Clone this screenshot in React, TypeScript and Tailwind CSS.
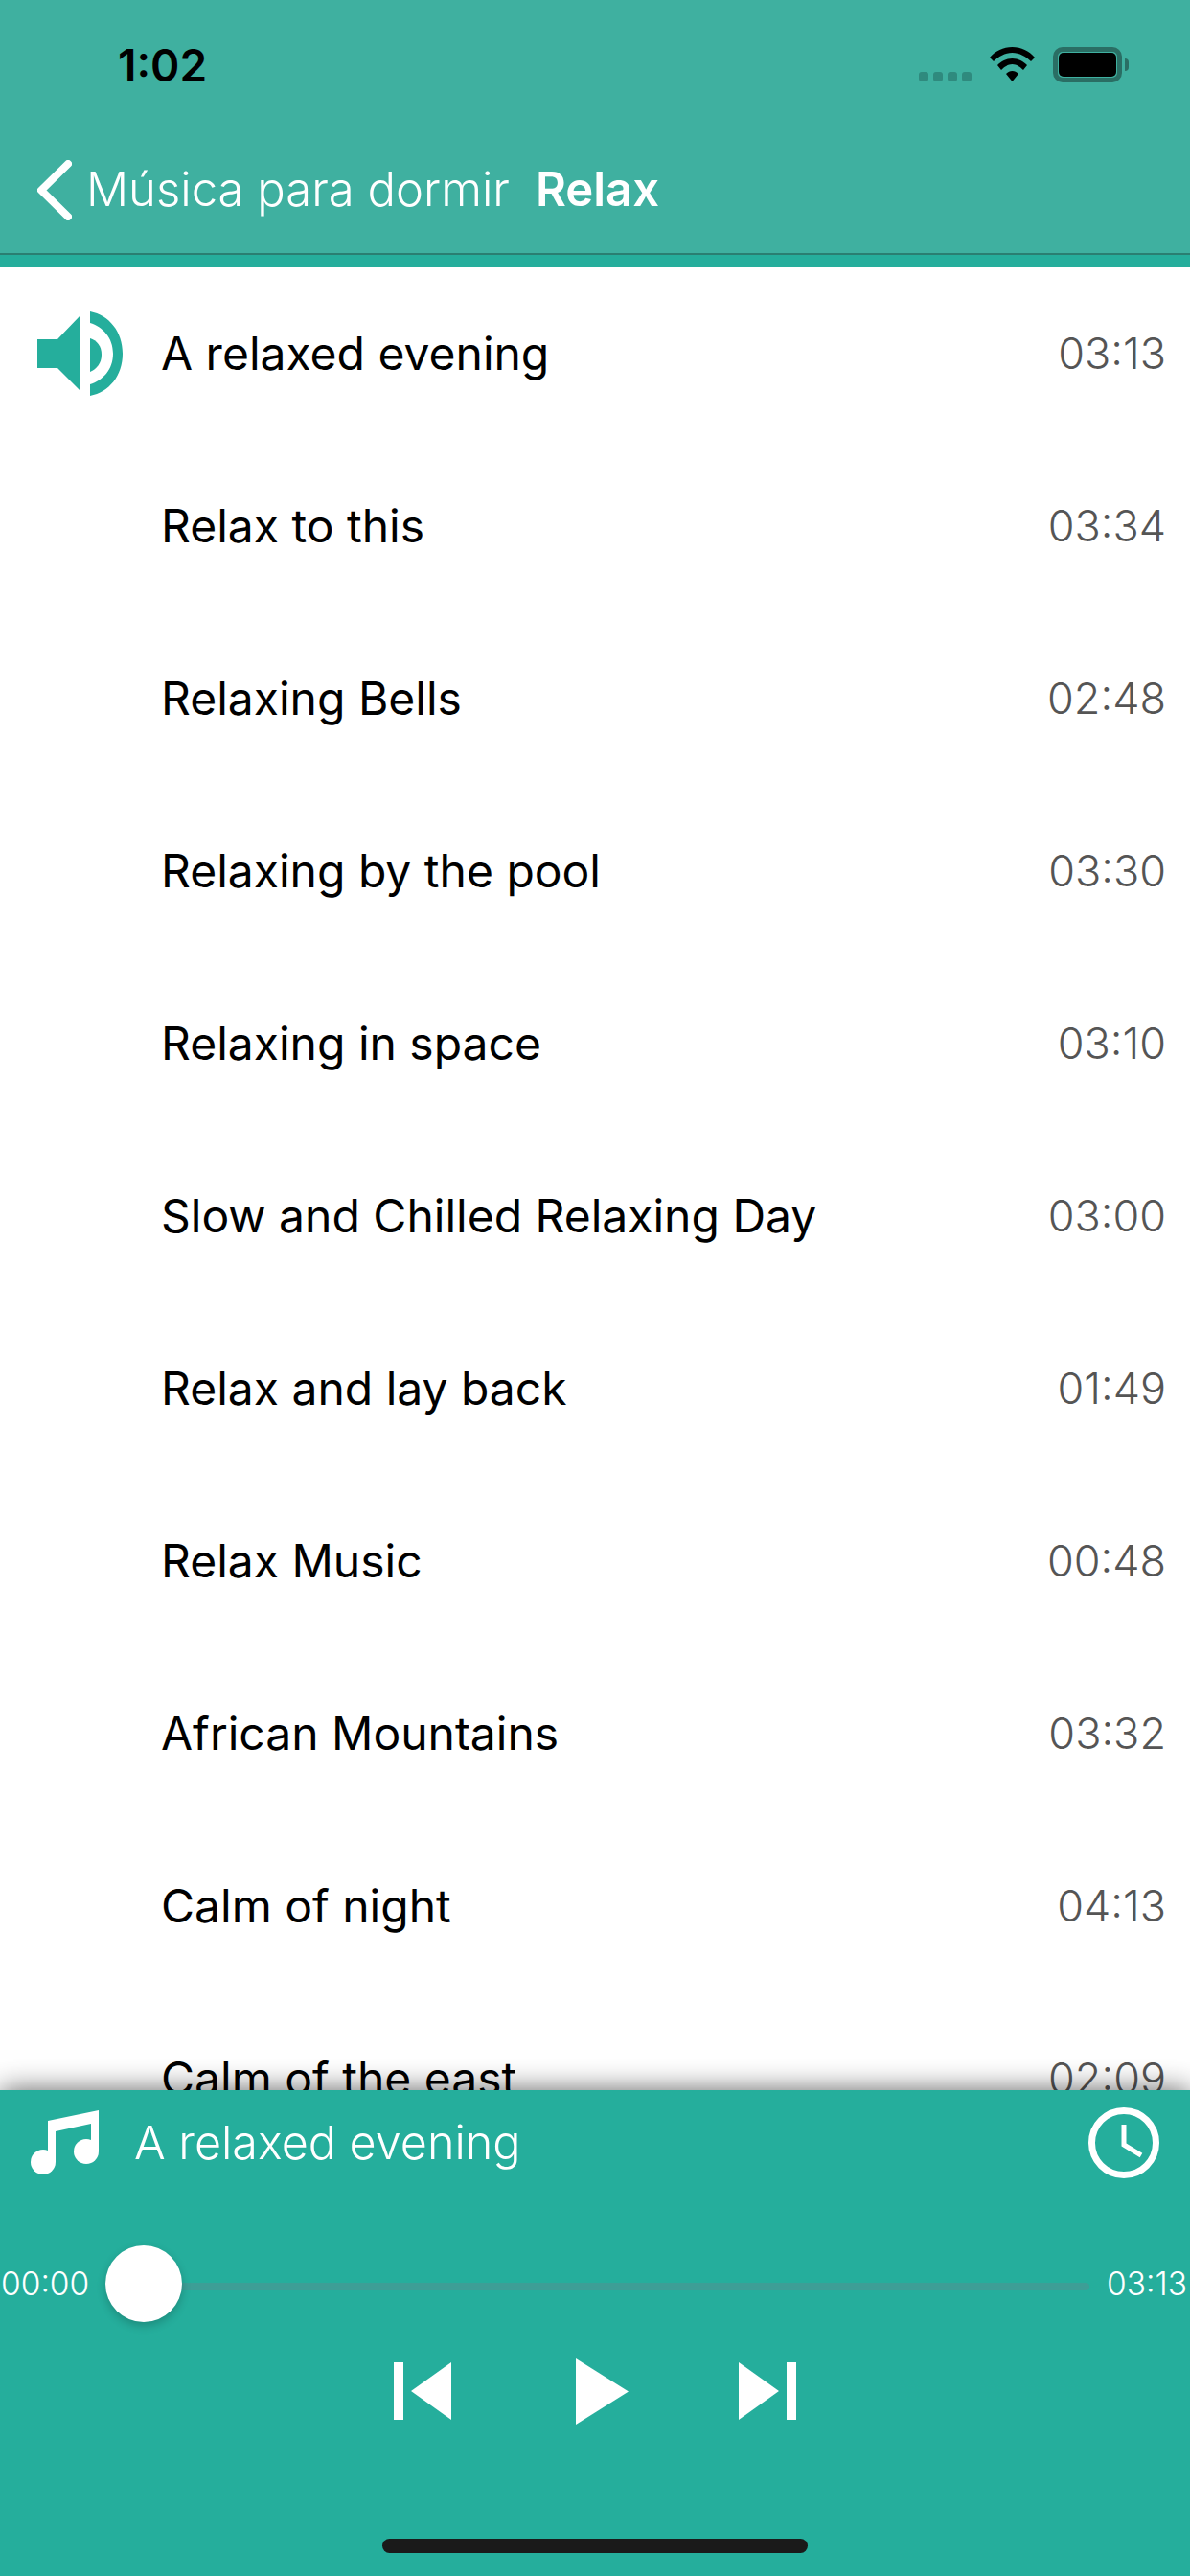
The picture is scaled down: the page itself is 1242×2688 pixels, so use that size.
import React from 'react';

type Track = {
    title: string;
    duration: string;
};

const tracks: Track[] = [
    { title: 'A relaxed evening', duration: '03:13' },
    { title: 'Relax to this', duration: '03:34' },
    { title: 'Relaxing Bells', duration: '02:48' },
    { title: 'Relaxing by the pool', duration: '03:30' },
    { title: 'Relaxing in space', duration: '03:10' },
    { title: 'Slow and Chilled Relaxing Day', duration: '03:00' },
    { title: 'Relax and lay back', duration: '01:49' },
    { title: 'Relax Music', duration: '00:48' },
    { title: 'African Mountains', duration: '03:32' },
    { title: 'Calm of night', duration: '04:13' },
    { title: 'Calm of the east', duration: '02:09' },
];

const SpeakerIcon = () => (
    <svg viewBox="38 324 92 90" className="w-[92px] h-[90px]" fill="#25AE9C">
        <path d="M39 354H60L84 329V408L60 384H39Z" />
        <path d="M94 325C114 329 128 346 128 369C128 392 114 409 94 413V401C107 397 118 386 118 369C118 352 107 341 94 337Z" />
        <path d="M94 353C101 355 106 361 106 370C106 379 101 385 94 388Z" />
    </svg>
);

const StatusIcons = () => (
    <div className="flex items-start">
        <div className="flex gap-[5px] mt-[26px] mr-[19px]">
            <div className="w-[10px] h-[10px] rounded-[3px] bg-[#2F8A7E]" />
            <div className="w-[10px] h-[10px] rounded-[3px] bg-[#2F8A7E]" />
            <div className="w-[10px] h-[10px] rounded-[3px] bg-[#2F8A7E]" />
            <div className="w-[10px] h-[10px] rounded-[3px] bg-[#2F8A7E]" />
        </div>
        <svg viewBox="0 0 47 36" className="w-[47px] h-[36px] mr-[19px]" fill="#000">
            <path d="M0 11C6 4 14 0 23.5 0C33 0 41 4 47 11L43 15C38 10 31 6 23.5 6C16 6 9 10 4 15Z" />
            <path d="M8 19C12 15 17 12 23.5 12C30 12 35 15 39 19L35 24C32 21 28 18 23.5 18C19 18 15 21 12 24Z" />
            <path d="M17 28C19 26 21 25 23.5 25C26 25 28 26 30 28L23.5 36Z" />
        </svg>
        <div className="flex items-center">
            <div className="w-[72px] h-[37px] rounded-[10px] border-[5px] border-[#2A6E64] p-px">
                <div className="w-full h-full rounded-[5px] bg-black" />
            </div>
            <div className="w-[4px] h-[13px] ml-[3px] rounded-r-[4px] bg-[#2A6E64]" />
        </div>
    </div>
);

const Controls = () => (
    <div className="flex items-center justify-center h-[70px]">
        <svg viewBox="0 0 60 60" className="w-[60px] h-[60px]" fill="#fff">
            <rect x="0" y="0" width="10" height="60" />
            <path d="M60 0V60L18 30Z" />
        </svg>
        <svg viewBox="0 0 55 69" className="w-[55px] h-[69px] ml-[130px] mr-[115px]" fill="#fff">
            <path d="M0 0L55 34.5L0 69Z" />
        </svg>
        <svg viewBox="0 0 60 60" className="w-[60px] h-[60px]" fill="#fff">
            <path d="M0 0V60L42 30Z" />
            <rect x="50" y="0" width="10" height="60" />
        </svg>
    </div>
);

const App = () => {
    return (
        <div className="relative flex flex-col w-[1242px] h-[2688px] overflow-hidden bg-white font-['Inter','Liberation_Sans',sans-serif]">
            <header className="shrink-0 bg-[#3FB0A0] h-[264px]">
                <div className="flex items-start justify-between h-[166px] pl-[123px] pr-[64px] pt-[49px]">
                    <span className="text-[46px] leading-[38px] font-semibold text-black">1:02</span>
                    <StatusIcons />
                </div>
                <div className="flex items-center h-[64px] pl-[39px] text-white text-[49px]">
                    <svg viewBox="0 0 36 63" className="w-[36px] h-[63px] mr-[15px]" fill="none" stroke="#fff" strokeWidth="8" strokeLinecap="round" strokeLinejoin="round">
                        <path d="M32 4L4 31.5L32 59" />
                    </svg>
                    <span className="font-light">Música para dormir</span>
                    <span className="ml-[27px] font-semibold">Relax</span>
                </div>
            </header>
            <div className="shrink-0 h-[15px] bg-[#25AE9C] border-t-2 border-[#2A7F72]" />

            <div className="flex-1 min-h-0 overflow-hidden">
                {tracks.map((track, index) => (
                    <div key={index} className="flex items-center h-[180px] pl-[38px] pr-[25px]">
                        <div className="w-[130px] shrink-0">{index === 0 && <SpeakerIcon />}</div>
                        <span className="flex-1 text-[48px] text-black font-normal">{track.title}</span>
                        <span className="text-[45px] font-light text-[#555555]">{track.duration}</span>
                    </div>
                ))}
            </div>

            <footer className="relative shrink-0 h-[507px] bg-[#25AE9C] text-white shadow-[0_0_28px_rgba(0,0,0,0.62)]">
                <div className="flex items-center justify-between h-[110px] pl-[31px] pr-[32px]">
                    <div className="flex items-center">
                        <svg viewBox="31 2199 73 70" className="w-[73px] h-[70px] mr-[36px]" fill="#fff">
                            <path d="M50 2211L103 2200V2243H95V2214L58 2222V2254H50Z" />
                            <circle cx="45" cy="2254" r="13" />
                            <circle cx="90" cy="2243" r="13" />
                        </svg>
                        <span className="text-[48.5px] font-light">A relaxed evening</span>
                    </div>
                    <svg viewBox="0 0 74 74" className="w-[74px] h-[74px]" fill="none" stroke="#fff">
                        <circle cx="37" cy="37" r="33.5" strokeWidth="7" />
                        <path d="M37 18V39L55 50" strokeWidth="5" />
                    </svg>
                </div>
                <div className="flex items-center h-[80px] mt-[52px] pl-[1px] pr-[3px]">
                    <span className="w-[109px] shrink-0 text-[33.5px] font-light">00:00</span>
                    <div className="relative flex-1 h-[8px] mt-[6px] rounded-full bg-[#3D9E96]">
                        <div className="absolute left-0 top-[-39px] w-[80px] h-[80px] rounded-full bg-white shadow-[0_4px_10px_rgba(0,0,0,0.2)]" />
                    </div>
                    <span className="ml-[18px] text-[33.5px] font-light">03:13</span>
                </div>
                <div className="mt-[37px]">
                    <Controls />
                </div>
                <div className="absolute bottom-[24px] left-[399px] w-[444px] h-[15px] rounded-full bg-[#1A1A1A]" />
            </footer>
        </div>
    );
};

export default App;
